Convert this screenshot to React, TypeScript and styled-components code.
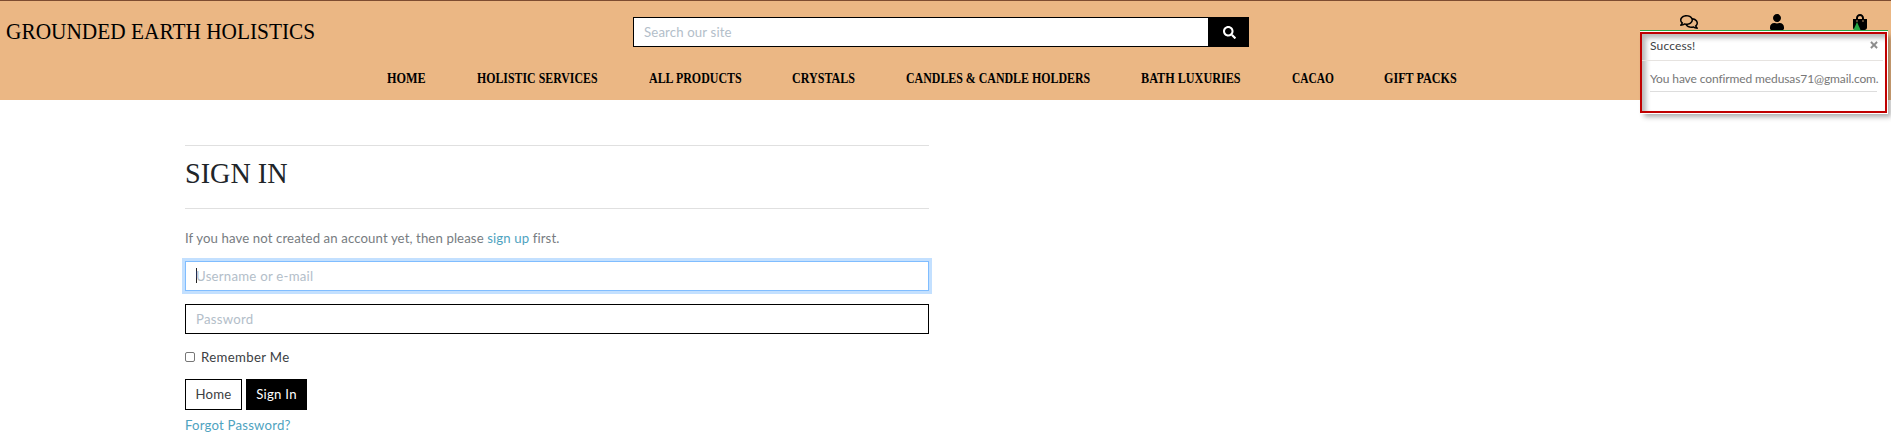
import React from 'react';
import styled, { createGlobalStyle } from 'styled-components';
import { FaRegComments, FaUser, FaShoppingBag, FaSearch, FaTimes } from 'react-icons/fa';

const sans = `Lato, "Liberation Sans", sans-serif`;
const serif = `"Liberation Serif", serif`;

const GlobalStyle = createGlobalStyle`
  *, *::before, *::after { box-sizing: border-box; }
  body { margin: 0; background: #fff; font-family: ${sans}; font-size: 13.2px; color: #212529; overflow: hidden; }
`;

const Page = styled.div`
  position: relative;
  height: 440px;
`;
const Header = styled.header`
  height: 100px;
  background: #ebb784;
  border-top: 1px solid #7d4c31;
`;
const TopBar = styled.div`
  display: grid;
  grid-template-columns: 633px 616px 1fr;
  height: 59px;
  padding-top: 16px;
`;
const Brand = styled.a`
  margin-left: 6px;
  font: 23.4px/28px ${serif};
  transform: scaleX(0.912);
  transform-origin: 0 0;
  color: #000;
  white-space: nowrap;
`;
const SearchForm = styled.form`
  display: flex;
  height: 30px;
`;
const SearchInput = styled.input`
  flex: 1;
  min-width: 0;
  border: 1px solid #000;
  border-right: 0;
  border-radius: 0;
  padding: 0 9px 0 10px;
  font: 400 13.2px ${sans};
  letter-spacing: 0.15px;
  outline: none;
  &::placeholder { color: #b3bec9; opacity: 1; }
`;
const SearchButton = styled.button`
  width: 41px;
  border: 0;
  background: #000;
  color: #fff;
  display: grid;
  place-items: center;
  padding: 0 0 0 1px;
`;
const Actions = styled.div`
  display: flex;
  justify-content: flex-end;
  padding-right: 23px;
  height: 16px;
  margin-top: -3px;
  color: #000;
  svg:nth-child(1) { margin: -1px 71px 0 0; }
  svg:nth-child(2) { margin-right: 67px; }
`;
const Nav = styled.nav`
  display: flex;
  gap: 51px;
  padding-left: 387px;
`;
const NavLink = styled.a<{ $w: number; $scale: number }>`
  width: ${p => p.$w}px;
  font: 700 13.9px/37px ${serif};
  transform: scaleX(${p => p.$scale * 0.978});
  transform-origin: 0 0;
  color: #000;
  white-space: nowrap;
`;
const Main = styled.main`
  width: 744px;
  margin: 45px 0 0 185px;
`;
const Heading = styled.h1`
  margin: 0;
  height: 64px;
  border: solid #e0e0e0;
  border-width: 1px 0;
  padding-top: 9px;
  font: 400 30px/36px ${serif};
`;
const HeadingText = styled.span`
  display: inline-block;
  transform: scaleX(0.94);
  transform-origin: 0 0;
`;
const Intro = styled.p`
  margin: 19px 0 12px;
  line-height: 21px;
  letter-spacing: 0.11px;
  color: #777c81;
`;
const Link = styled.a`
  color: #4fa3bf;
`;
const Field = styled.div<{ $focus?: boolean }>`
  display: flex;
  align-items: center;
  height: 30px;
  border: 1px solid ${p => (p.$focus ? '#80bdff' : '#000')};
  box-shadow: ${p => (p.$focus ? '0 0 0 3px #c3e0ff' : 'none')};
  padding: 0 10px 1px;
  margin-bottom: 13px;
`;
const Caret = styled.span`
  width: 1px;
  height: 15px;
  margin-right: -1px;
  background: #222;
`;
const Placeholder = styled.span`
  color: #b3bec9;
  letter-spacing: 0.25px;
`;
const Remember = styled.label`
  display: flex;
  align-items: center;
  gap: 6px;
  height: 20px;
  margin-top: 12px;
  letter-spacing: 0.35px;
  color: #3c4043;
`;
const Check = styled.input`
  appearance: none;
  width: 10px;
  height: 10px;
  margin: 0;
  border: 1px solid #767676;
  border-radius: 2px;
`;
const Buttons = styled.div`
  display: flex;
  gap: 4px;
  margin-top: 12px;
`;
const Button = styled.button<{ $dark?: boolean; $w: number }>`
  width: ${p => p.$w}px;
  height: 31px;
  padding: 0 0 1px;
  border: 1px solid #000;
  background: ${p => (p.$dark ? '#000' : '#fff')};
  color: ${p => (p.$dark ? '#fff' : '#3c4043')};
  font: 400 13.2px ${sans};
  letter-spacing: 0.25px;
`;
const Forgot = styled(Link)`
  display: block;
  margin-top: 5px;
  line-height: 20px;
  letter-spacing: 0.2px;
`;
const Toast = styled.aside`
  position: absolute;
  top: 30px;
  left: 1640px;
  width: 248px;
  height: 83px;
  border-top: 1px solid #28a745;
  background: #fff;
  padding-top: 1px;
`;
const Pointer = styled.i`
  position: absolute;
  left: 213px;
  top: -9px;
  border: solid transparent;
  border-width: 0 4px 9px;
  border-bottom-color: #28a745;
`;
const ToastFrame = styled.div`
  width: 247px;
  height: 81px;
  border: 2px solid #c00000;
  box-shadow: 1px 1px 0 #fff, 4px 4px 5px rgba(0, 0, 0, 0.32), inset 4px 4px 5px rgba(0, 0, 0, 0.28);
  padding: 0 8px;
`;
const ToastHeader = styled.div`
  display: flex;
  justify-content: space-between;
  align-items: center;
  height: 27px;
  margin: 0 -6px 0 -8px;
  padding: 0 4px 4px 8px;
  border-bottom: 1px solid #e6e3e0;
  font-size: 12px;
  letter-spacing: 0.15px;
  color: #3c4043;
  svg { color: #8a8a8a; stroke: #8a8a8a; stroke-width: 15px; }
`;
const ToastBody = styled.div`
  height: 31px;
  border-bottom: 1px solid #ddd;
  font-size: 12px;
  line-height: 35px;
  letter-spacing: -0.11px;
  color: #777;
  white-space: nowrap;
`;

const links: { label: string; width: number; scale: number }[] = [
  { label: 'HOME', width: 39, scale: 0.9 },
  { label: 'HOLISTIC SERVICES', width: 121, scale: 0.873 },
  { label: 'ALL PRODUCTS', width: 92, scale: 0.88 },
  { label: 'CRYSTALS', width: 63, scale: 0.888 },
  { label: 'CANDLES & CANDLE HOLDERS', width: 184, scale: 0.876 },
  { label: 'BATH LUXURIES', width: 100, scale: 0.897 },
  { label: 'CACAO', width: 41, scale: 0.84 },
  { label: 'GIFT PACKS', width: 73, scale: 0.893 },
];

export default function App() {
  return (
    <Page>
      <GlobalStyle />
      <Header>
        <TopBar>
          <Brand>GROUNDED EARTH HOLISTICS</Brand>
          <SearchForm>
            <SearchInput placeholder="Search our site" />
            <SearchButton type="button" aria-label="Search"><FaSearch size={13} /></SearchButton>
          </SearchForm>
          <Actions>
            <FaRegComments size={18} />
            <FaUser size={16} />
            <FaShoppingBag size={16} />
          </Actions>
        </TopBar>
        <Nav>
          {links.map(l => <NavLink key={l.label} $w={l.width} $scale={l.scale}>{l.label}</NavLink>)}
        </Nav>
      </Header>
      <Main>
        <Heading><HeadingText>SIGN IN</HeadingText></Heading>
        <Intro>If you have not created an account yet, then please <Link>sign up</Link> first.</Intro>
        <Field $focus><Caret /><Placeholder>Username or e-mail</Placeholder></Field>
        <Field><Placeholder>Password</Placeholder></Field>
        <Remember><Check type="checkbox" />Remember Me</Remember>
        <Buttons>
          <Button $w={57}>Home</Button>
          <Button $w={61} $dark>Sign In</Button>
        </Buttons>
        <Forgot>Forgot Password?</Forgot>
      </Main>
      <Toast>
        <Pointer />
        <ToastFrame>
          <ToastHeader>Success!<FaTimes size={10} /></ToastHeader>
          <ToastBody>You have confirmed medusas71@gmail.com.</ToastBody>
        </ToastFrame>
      </Toast>
    </Page>
  );
}
